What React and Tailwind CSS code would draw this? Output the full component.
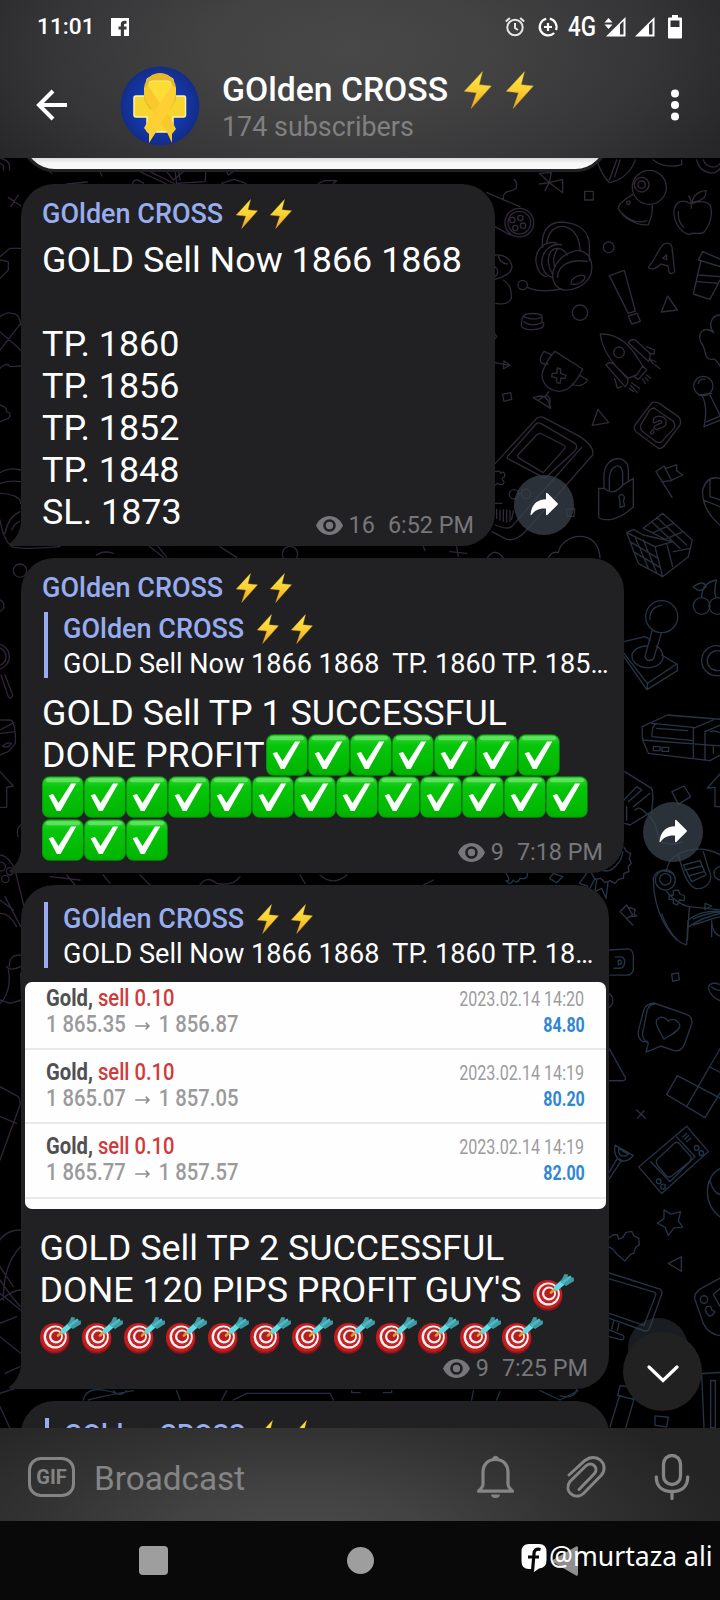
import React from "react";

function Bolt({ className }) {
  return (
    <svg viewBox="313 211 85 114" preserveAspectRatio="none" className={className}>
      <defs>
        <linearGradient id="bolt" x1="0" y1="0" x2="0" y2="1">
          <stop offset="0" stopColor="#fbe94a" />
          <stop offset=".5" stopColor="#fad133" />
          <stop offset="1" stopColor="#f0a01e" />
        </linearGradient>
      </defs>
      <path d="M369 213 314 272 351 276 335 323 396 256 359 252Z" fill="url(#bolt)" stroke="#dfae2a" strokeWidth="1.5" strokeLinejoin="round" />
    </svg>
  );
}

function Check() {
  return (
    <svg viewBox="0 0 42 42" className="h-[42px] w-[42px] shrink-0">
      <defs>
        <linearGradient id="chk" x1="0" y1="0" x2="0" y2="1">
          <stop offset="0" stopColor="#35d435" />
          <stop offset=".25" stopColor="#06c60a" />
          <stop offset="1" stopColor="#00b400" />
        </linearGradient>
      </defs>
      <rect x="0" y=".3" width="41.8" height="41.4" rx="7.5" fill="#0a8f10" />
      <rect x=".9" y="1.200" width="40" height="39.6" rx="6.8" fill="url(#chk)" />
      <rect x="4" y="2.200" width="34" height="4" rx="2" fill="#8bf08b" opacity=".55" />
      <path d="M6.600 19.300 11 18 16.500 27 29 7.500 34.200 7.500 18.600 35 14.800 35Z" fill="#fff" />
    </svg>
  );
}

function Target() {
  return (
    <svg viewBox="0 0 42 42" className="h-[42px] w-[42px] shrink-0">
      <ellipse cx="14.800" cy="22.300" rx="14.700" ry="14.400" fill="#8d1515" />
      <ellipse cx="14.600" cy="20.300" rx="14.600" ry="14.400" fill="#c21d20" />
      <circle cx="15.200" cy="20" r="11.600" fill="#f6f0f0" />
      <circle cx="15.500" cy="19.800" r="9.500" fill="#c42225" />
      <circle cx="16" cy="19.600" r="7" fill="#f6f0f0" />
      <circle cx="16.200" cy="19.400" r="4.900" fill="#b81c1f" />
      <path d="M18 18.600 23 14.200" stroke="#d9a032" strokeWidth="2.600" strokeLinecap="round" />
      <path d="M23.500 14 31 7.400" stroke="#5fdde4" strokeWidth="5.400" strokeLinecap="round" />
      <path d="M27.500 8 31.500 0 35 .6 34.600 3.600 40.800 3.600 41 7 33 12Z" fill="#3d9ba6" />
      <path d="M30 8.400 37 3" stroke="#4fb8c2" strokeWidth="2.600" strokeLinecap="round" />
    </svg>
  );
}

function Eye() {
  return (
    <svg viewBox="0 0 27 19" className="h-[19px] w-[27px] shrink-0">
      <path fillRule="evenodd" fill="#77777b" d="M13.5 0C7.5 0 2.6 3.7 0 9.5 2.6 15.300 7.500 19 13.500 19S24.400 15.300 27 9.500C24.400 3.700 19.500 0 13.500 0ZM13.500 3.200A6.300 6.300 0 1 1 13.500 15.800 6.300 6.300 0 0 1 13.500 3.200ZM13.500 5.800A3.700 3.700 0 1 0 13.500 13.200 3.700 3.700 0 0 0 13.500 5.800Z" />
    </svg>
  );
}

function Meta({ views, time, className }) {
  return (
    <div className={"flex h-7 items-center text-[23.400px] leading-7 whitespace-pre text-[#77777b] " + className}>
      <Eye />
      <span className="ml-[6px]">{views}</span>
      <span className="ml-[13px]">{time}</span>
    </div>
  );
}

function Name() {
  return (
    <div className="flex h-8 items-center pt-[1px] text-[27px] leading-8 font-medium whitespace-nowrap text-[#98adf0]">
      GOlden CROSS
      <Bolt className="ml-[13px] h-[30px] w-[22px]" />
      <Bolt className="ml-[12px] h-[30px] w-[22px]" />
    </div>
  );
}

function Reply({ text }) {
  return (
    <div className="ml-[2px] flex h-[66px] border-l-4 border-[#98adf0] pl-[15px]">
      <div className="flex flex-col">
        <Name />
        <div className="mt-[5px] h-[30px] text-[27.050px] leading-[30px] whitespace-pre text-white">{text}</div>
      </div>
    </div>
  );
}

function Bubble({ children, className }) {
  return (
    <div className={"relative flex shrink-0 flex-col rounded-[33px] rounded-bl-none bg-[#212123] " + className}>
      {children}
      <svg viewBox="0 0 13 30" className="absolute bottom-0 -left-[12px] h-[30px] w-[13px]">
        <path d="M13 0C12 13 8.500 22 .5 27.500-.3 28.500.5 29.500 2 30H13Z" fill="#212123" />
      </svg>
    </div>
  );
}

function Share({ className }) {
  return (
    <div className={"flex h-[60px] w-[60px] shrink-0 items-center justify-center rounded-full bg-[#39414c]/75 pb-[2px] " + className}>
      <svg viewBox="0 0 28 24" className="h-6 w-7">
        <path d="M.5 22.500C1.500 12.500 7 7.500 16 7.200V1.500Q16.300.4 17.300 1L27.600 11.300Q28.200 12 27.600 12.700L17.300 23Q16.300 23.600 16 22.500V16.500C9 16 4.500 18.500 1.600 22.800Q.6 23.800.5 22.500Z" fill="#fff" />
      </svg>
    </div>
  );
}

function Trade({ open, close, time, profit, className }) {
  return (
    <div className={"flex h-[74.200px] justify-between border-b-2 border-[#e9e9ea] px-[21px] " + className}>
      <div className="flex flex-col">
        <div className="h-[26px] w-[150px] origin-left scale-x-[0.825] text-[24.500px] leading-[26px] font-medium whitespace-pre text-[#cf3b3b]">
          <span className="font-bold text-[#505052]">Gold,</span> sell 0.10
        </div>
        <div className="flex h-[26px] w-[240px] origin-left scale-x-[0.85] items-center text-[23.800px] leading-[26px] font-medium whitespace-pre text-[#9a9a9c]">
          {open}
          <svg viewBox="0 0 20 12" className="mx-[10px] mt-1 h-3 w-[19px]">
            <path d="M1 6H18M14 2.500 18 6 14 9.500" fill="none" stroke="#8e8e90" strokeWidth="1.800" />
          </svg>
          {close}
        </div>
      </div>
      <div className="flex flex-col items-end">
        <div className="h-[26px] origin-right scale-x-[0.785] text-[20.500px] leading-[29px] whitespace-pre text-[#9c9c9e]">{time}</div>
        <div className="h-[26px] origin-right scale-x-[0.77] text-[20.800px] leading-[28px] font-bold text-[#2f86d4]">{profit}</div>
      </div>
    </div>
  );
}

function Doodles() {
  return (
    <svg viewBox="0 0 720 1600" className="absolute -top-[158px] left-0 h-[1600px] w-[720px]" fill="none" strokeLinecap="round" strokeLinejoin="round">
      <g transform="translate(480 160) scale(.33333)" strokeWidth="4" stroke="#302938">
        <path d="M350 0C360 30 370 50 388 68 430 60 455 30 466 0M410 0 388 60M420 0 404 50M520 0C545 20 580 22 605 14V0M650 0C660 45 715 50 722 20M670 0C680 25 710 28 722 8" />
        <path d="M178 40 208 68 214 38ZM208 68 248 98V58ZM208 68 195 92M208 68 178 72M314 94H340V120H314Z" />
        <circle cx="508" cy="82" r="51" /><circle cx="485" cy="74" r="22" /><circle cx="485" cy="74" r="11" />
        <path d="M458 104C430 120 415 135 415 145 430 175 470 198 505 194 515 170 520 150 516 133M425 158C450 185 480 190 500 182M440 126q12-8 10 4-10 10-10-4" />
        <path d="M634 132C600 112 580 130 582 165 588 200 610 222 628 223 645 215 655 225 670 218 690 200 700 160 690 135 672 118 650 125 634 132ZM634 145C635 125 632 115 626 108M636 128C640 100 665 92 678 92 680 115 660 125 640 126M595 155Q592 185 612 202" />
        <path d="M20 98 120 140M45 200 90 225M70 118C68 85 95 100 108 85 112 70 108 62 102 58" />
        <circle cx="118" cy="188" r="43" /><circle cx="118" cy="188" r="34" /><circle cx="97" cy="180" r="8" /><circle cx="121" cy="174" r="8" /><circle cx="106" cy="204" r="8" /><circle cx="129" cy="197" r="8" />
        <path d="M188 262C182 215 205 186 245 186 305 190 330 220 328 262V302M200 250C205 210 230 196 255 200 290 210 300 245 300 272M230 250C200 240 165 265 168 305 170 330 185 348 200 350M245 254C215 250 185 270 185 310 188 330 195 345 215 352M262 285C250 262 225 260 212 275 200 295 205 325 218 342M235 265Q215 285 224 322" />
        <path d="M218 352C215 310 260 270 300 272 335 280 340 315 332 345 315 380 280 392 250 390 232 385 220 370 218 352ZM232 352C235 315 270 295 322 305M274 372C270 355 300 340 314 348 318 362 290 378 274 372ZM142 382C170 395 205 395 245 387" />
        <circle cx="128" cy="375" r="14" /><circle cx="386" cy="262" r="16" /><circle cx="300" cy="458" r="23" />
        <path d="M505 322C525 300 535 265 552 252 565 246 574 252 576 262L584 335C578 343 570 342 567 335L564 318 542 312C530 328 512 330 505 322ZM548 295 560 284V299Z" />
        <path d="M388 347 433 331 466 453 445 460ZM445 468 471 460 481 484 455 492ZM563 408 592 450 544 456ZM354 748 386 788 337 796Z" />
        <path d="M45 285C75 282 92 298 96 320 95 340 75 350 45 358M45 320Q62 335 45 350M55 288Q60 310 82 312M70 360C88 370 95 390 94 415 88 430 70 434 48 430" />
        <path d="M125 485C125 475 130 472 130 468 135 458 180 458 186 468V485C195 490 192 502 180 505 160 512 130 510 124 498ZM130 468C140 478 175 480 186 470M132 485C145 497 175 497 186 486M45 608 88 616M72 603 90 616 70 626ZM68 703 92 698 95 718 72 724ZM45 522 50 530 45 536" />
        <path d="M361 522C420 520 455 560 488 618L470 645 442 655C395 610 365 565 361 522ZM445 548Q455 535 466 540L510 580Q512 595 505 604ZM378 615Q385 605 398 610L440 650Q450 665 435 680ZM500 560 524 570 522 582 508 580M404 655 412 684 425 680M488 618 500 630 475 658 462 650M508 595 520 612M525 614 540 626M516 600 528 606M500 645 512 655M495 652 504 662M488 658 496 670M455 668 478 685M452 676 472 698M448 685 460 695" />
        <circle cx="417" cy="577" r="16" />
        <path d="M225 574 308 627C290 665 265 695 235 694 200 690 180 660 188 635Q200 600 225 574ZM204 612C170 615 180 590 192 574L214 584M297 645 323 660C310 680 290 680 276 672M206 695 198 706M160 713 182 708Q205 708 212 745ZM175 720Q190 710 200 706 215 715 208 735M232 624 242 627 242 640 258 646 255 656 243 654 240 670 230 668 231 654 215 650 217 640 230 640Z" />
        <path d="M516 728Q525 724 538 730L595 770Q605 780 600 795L555 855Q545 868 535 865L468 815Q460 805 465 795ZM522 744 580 784Q588 795 582 805L545 845Q538 850 528 845L485 812Q478 800 485 790L508 752Q514 744 522 744M520 778C530 760 565 770 558 790 555 808 535 800 532 810L522 805C520 790 548 795 545 785 540 775 530 790 520 788ZM514 812q8-6 8 4-8 12-10 2z" />
        <path d="M46 910 170 775Q180 768 190 772L300 830Q345 860 338 885L140 1110Q110 1145 80 1138L36 1115M82 890 165 795Q172 786 182 790L285 850Q295 860 285 872L195 955 82 895ZM118 895Q110 890 116 882L170 825Q178 818 186 822L250 855Q260 860 252 868L190 938ZM305 862 95 1100Q80 1110 46 1095M46 935Q60 930 62 940 75 930 74 950 60 955 72 965 72 980 52 970L46 975M46 1030H66M50 1048V1075M60 1050V1080M70 1050V1084M80 1050V1086M90 1052V1084M100 1052 95 1078" />
        <circle cx="102" cy="1003" r="14" /><circle cx="138" cy="1001" r="14" /><path d="M258 1048 284 1046 282 1070 262 1068Z" />
      </g>
      <g transform="translate(480 160) scale(.33333)" strokeWidth="4" stroke="#2a303e">
        <path d="M655 300 668 275 722 298M655 300 722 320M662 305 640 402 690 418 720 360M655 345 720 350M652 365 715 370M722 465C690 465 685 500 702 518 670 495 650 520 664 550 680 565 670 600 695 598 705 595 708 600 722 620" />
        <path d="M690 705 722 770M665 705Q685 740 672 800L722 780M655 705 695 700M680 785 722 768M655 670Q660 655 675 658" /><circle cx="670" cy="678" r="29" />
        <path d="M372 985V945C375 885 445 880 445 930V960M388 990V955C390 910 430 905 428 945V975M356 985 372 985Q400 1010 428 975L460 955V1040Q430 1070 395 1078 360 1082 356 1070ZM418 1015C412 1000 435 1000 433 1016L430 1022 434 1038 420 1042 420 1024ZM528 935 576 1012M528 935 552 918 575 962 546 965M556 926 590 914 590 932 608 945 572 962" />
        <path d="M440 1118 460 1108 490 1125 578 1145 560 1150 525 1160ZM490 1105 548 1060 637 1140 625 1190 548 1250 475 1210 440 1118M525 1160 548 1250M560 1150 578 1220M490 1105 560 1140M465 1130 505 1225M490 1140 530 1238M450 1145 535 1195M460 1175 540 1222M515 1085 600 1165M530 1072 620 1155M520 1118 580 1090M560 1135 610 1115M580 1175 630 1165M720 955Q680 945 668 990 665 1050 720 1095M690 960V1010L722 1020M670 1020 720 1040" />
        <path d="M205 1194Q215 1172 235 1178C245 1120 355 1100 360 1194M22 1194Q45 1160 70 1194" />
      </g>
      <g transform="translate(480 540) scale(.33333)" strokeWidth="4" stroke="#263546">
        <circle cx="665" cy="198" r="25" /><circle cx="712" cy="198" r="25" />
        <path d="M665 173C665 145 680 125 710 120Q700 150 708 172M640 140Q670 118 678 140 660 162 640 140" />
        <circle cx="545" cy="230" r="48" /><path d="M510 238Q508 202 545 196" /><circle cx="710" cy="362" r="45" /><circle cx="712" cy="362" r="30" />
        <path d="M516 272 495 350C500 365 518 365 522 352L544 280M432 305 495 290 512 300M432 340 502 430 590 372 545 345M502 430V448L592 392V372M432 350 500 448M500 318C465 320 450 340 458 360 480 395 545 390 550 350Q545 325 528 318" />
        <path d="M487 560 562 525 722 538M487 560Q485 590 490 605L505 640 690 662 722 645M487 600 722 618M516 550 640 562V656M530 550Q515 555 516 590L640 602M530 565 622 572M640 565 700 540M675 575V660M675 575 722 555M690 575Q705 570 720 578M700 620V640M520 620H540V632H520ZM546 622H566V634H546ZM722 700 682 744 705 742V800H722" />
        <path d="M434 695 515 745Q522 760 515 815L450 855 434 850M432 780 470 740 485 750 445 785M440 800V840M460 800 510 760M465 810Q475 800 485 808L505 825M576 755 612 738 632 770 595 793ZM510 830C540 860 525 895 548 908 570 915 590 915 608 905" />
        <path d="M560 990C570 930 660 910 722 945M520 1015C530 985 555 990 580 1000M520 1015C520 1080 540 1150 590 1200M595 945C610 1000 620 1030 645 1045 680 1050 705 1020 685 985L670 935M610 975 660 962 678 1005 635 1025ZM615 990 665 978M625 1008 672 995M622 1200 628 1100C600 1095 570 1070 560 1055M628 1100 722 1110M625 1140C650 1120 690 1110 722 1115M640 1155 700 1135 722 1130M675 1090 695 1098 675 1108ZM695 1190V1150" />
        <circle cx="556" cy="1020" r="30" /><circle cx="556" cy="1018" r="17" /><circle cx="722" cy="1000" r="20" />
        <path d="M580 1052 595 1050 600 1062 614 1068 612 1082 598 1080 592 1095 580 1090 580 1078 567 1078 568 1065 580 1066Z" />
        <path d="M432 922 440 935 452 940 448 955 454 970 444 980 447 995 432 1000 430 1015 415 1018 405 1030 390 1022 375 1028 362 1015 345 1018 335 1000M355 985Q385 1005 410 975 428 955 428 935M345 1015 325 1055 322 1038 298 1030 320 1000M350 1020 345 1055 365 1045 378 1075 384 1028M78 1000Q95 1025 78 1022 90 1040 100 1020 110 1035 120 1015 145 1020 142 1000M208 1015 220 1000 248 1010 230 1028Z" />
        <path d="M420 1115 458 1155M420 1115 440 1095 458 1125 440 1135M445 1102 466 1108 462 1122 470 1128 455 1130" />
      </g>
      <g transform="translate(560 900) scale(.33333 .3444)" strokeWidth="4" stroke="#223446">
        <path d="M305 40C320 80 350 128 380 130L384 60M385 78C420 55 450 45 480 40M400 55Q440 38 480 35M455 60Q455 95 480 105M148 145 205 142Q220 145 220 165V200Q218 218 200 218H150M165 165H185C200 170 195 198 180 198H162M175 175V188Q190 185 182 175ZM335 215 355 212 358 232 338 236ZM148 272Q160 280 158 298 155 308 148 312M480 245Q450 235 445 255 450 280 480 292M455 252Q470 265 480 262" />
        <path d="M262 318Q270 300 290 302L380 332Q400 340 395 360L375 415Q365 440 345 438L302 424 258 442 265 415Q245 405 248 385ZM285 299Q258 300 252 318L235 380Q232 402 250 412L262 410M312 404C295 375 285 360 290 348 300 335 318 340 325 352 335 340 355 350 360 365 358 380 335 390 312 404Z" />
        <path d="M148 432 196 515Q198 525 185 525H148M480 432 380 600M320 565 352 510 480 575M320 565 435 632 480 560M450 485 480 500M230 610 256 634M252 612 232 634" />
        <path d="M380 657 445 730 305 852 236 775ZM350 688 405 745 330 818 272 760M345 705Q355 700 362 712L390 742Q398 752 388 760L335 802Q325 808 318 800L292 770Q285 758 295 750ZM368 688 380 678M374 695 386 684M380 702 392 692" />
        <circle cx="410" cy="720" r="7" /><circle cx="424" cy="735" r="7" /><circle cx="296" cy="817" r="7" /><circle cx="309" cy="832" r="7" />
        <path d="M148 790 172 750 185 755 148 810M165 712 220 742Q200 765 178 755 160 740 165 712ZM176 722 205 738Q195 748 180 740 174 732 176 722M312 900 333 912 362 905 355 932 368 950 342 952 325 974 315 950 292 938 312 925ZM480 780C435 800 425 880 480 920M450 815Q460 850 480 855" />
        <path d="M148 980 160 972 172 972 176 985 188 980 198 965 215 962 222 975 236 982 238 1000 226 1010 222 1025 210 1030 195 1048 182 1038 170 1028 160 1015 148 1008M325 1055 364 1036 364 1078ZM148 1083 300 1130Q308 1135 305 1145L268 1245Q262 1255 250 1250L148 1215M148 1100 280 1138Q290 1142 286 1150L252 1235 148 1200M178 1225 172 1250M162 1220 155 1245M148 1248 190 1265Q195 1275 185 1277L148 1268M480 1098 420 1130Q400 1145 405 1160L430 1230Q445 1260 480 1265M480 1128 460 1145 480 1180" />
        <circle cx="432" cy="1160" r="11" /><path d="M440 1180 452 1180 455 1190 465 1195 458 1205 448 1208 440 1200 436 1190Z" />
        <path d="M180 1410 222 1415 220 1450 173 1438ZM178 1440 150 1530M222 1450 195 1540M285 1498 325 1502 320 1530 285 1525ZM425 1375 480 1372M425 1375 432 1532M452 1395H466V1532H452ZM0 1440Q45 1450 50 1420" />
      </g>
      <g transform="scale(.33333)" strokeWidth="4" stroke="#302538">
        <path d="M0 474C20 478 32 490 28 510M0 490Q15 495 10 510M25 592 63 618M55 585 32 620M0 770 30 745 62 745M0 780 25 785V810L0 835M0 950Q20 935 35 940 60 940 62 975M0 995 62 1050M62 970 0 1050M0 1105Q20 1085 30 1100L62 1098M0 1215Q20 1220 20 1235 38 1240 25 1255L0 1265M145 510 155 520M300 515 306 528M200 552 262 546M420 515 500 552M450 515 525 552M500 515 520 540 550 515M398 550Q405 530 430 550M665 550 702 538 738 550M955 550 975 542 1010 542 1000 550M525 515 530 550 615 545 618 515M536 515 540 540M680 515 685 525 700 515" />
        <path d="M0 1418Q30 1400 62 1410M0 1450Q30 1440 62 1445M0 1480C30 1480 62 1490 62 1510M15 1600Q25 1550 60 1535M0 1560Q10 1620 35 1640 60 1650 180 1640M35 1590Q45 1570 58 1565M450 1640 490 1672M475 1640 500 1672M660 1640 710 1672M290 1665Q310 1650 340 1660M1270 1640 1275 1652M1350 1655 1400 1660M1370 1640 1375 1670" />
        <circle cx="870" cy="1662" r="23" /><circle cx="60" cy="1712" r="20" /><circle cx="-6" cy="1817" r="18" /><circle cx="-10" cy="1970" r="38" /><circle cx="-10" cy="1970" r="28" />
        <path d="M3 2025 25 2090Q35 2100 38 2085L15 2025M0 2160H30Q48 2165 46 2230L25 2255 0 2265M0 2190 42 2168M8 2240Q20 2225 34 2230 25 2245 8 2240M0 2200 45 2195M0 2315 40 2358 20 2362V2422H0M62 2475Q48 2485 54 2510" />
        <circle cx="3" cy="2600" r="13" /><circle cx="30" cy="2614" r="11" /><circle cx="16" cy="2637" r="11" />
        <path d="M0 2565Q40 2570 55 2650L72 2720M0 2740Q30 2740 50 2780M15 2690 62 2780M0 2700 40 2730M28 2900Q25 2865 62 2865M20 2900Q30 2915 62 2900M25 2910Q35 2960 10 3000L0 3010M62 2920 65 3000 30 3010 0 3000" />
        <path d="M0 3260 55 3290Q62 3300 60 3315L0 3480M0 3350 50 3370M62 3690Q20 3690 0 3720M62 3740Q10 3790 10 3900M0 3800 40 3860M0 3900Q40 3870 62 3870M0 3840Q40 3900 62 3920M150 2630 240 2640M200 2625 225 2655M310 2625 330 2650M420 2625 450 2655M600 2655Q620 2625 650 2650 700 2660 720 2630M900 2625 915 2650M960 2625Q1000 2660 1040 2625M1270 2655 1300 2640" />
        <path d="M0 3880 62 3930M0 3970 50 3950M0 4010 62 4060M15 4120 60 4100M0 4180 62 4160M0 4220 30 4285M0 4285V4500M5 4310V4285" stroke="#28273e" />
        <path d="M250 4200Q260 4150 350 4180M265 4200Q300 4190 400 4172M340 4172Q360 4195 380 4172M530 4172 540 4200M680 4172 665 4200M700 4200 740 4180 990 4180 1000 4200M1055 4172V4178H1080M1150 4178H1175V4172M1420 4172 1415 4200M1500 4175 1490 4200M1620 4172 1680 4200 1735 4172" stroke="#203040" />
      </g>
    </svg>
  );
}

function Header() {
  return (
    <header className="z-10 flex h-[158px] shrink-0 flex-col bg-[radial-gradient(ellipse_420px_190px_at_350px_50px,#484849_0%,#424243_35%,#353537_72%,#272729_100%)]">
      <div className="flex h-[54px] items-center pl-[37px] text-white">
        <span className="w-[74px] text-[22.700px] font-medium">11:01</span>
        <svg viewBox="0 0 18 18" className="h-[18px] w-[18px]">
          <path fillRule="evenodd" fill="#fff" d="M0 0H18V18H13V11.500H15.500V8.500H13V7Q13 5.800 14.200 5.800H15.500V2.800H13.500Q9.800 2.800 9.800 6.500V8.500H7.500V11.500H9.800V18H0Z" />
        </svg>
        <svg viewBox="0 0 24 24" className="ml-[374px] h-6 w-6" fill="none" stroke="#e6e6e6" strokeWidth="2">
          <circle cx="12" cy="12.500" r="7.700" /><path d="M12 8V13L15 15M2.800 6.500 6.800 3M21.200 6.500 17.200 3" />
        </svg>
        <svg viewBox="0 0 24 24" className="ml-[9px] h-6 w-6" fill="none" stroke="#fff" strokeWidth="2.200">
          <path d="M13.800 3.700A8.500 8.500 0 0 1 20 15M18.200 18A8.500 8.500 0 1 1 10.200 3.700M12 8V16M8 12H16" />
        </svg>
        <span className="ml-[8px] w-[27px] origin-left scale-x-[0.83] text-[27px] font-medium">4G</span>
        <svg viewBox="0 0 22 20" className="ml-[9px] h-5 w-[22px]">
          <path fillRule="evenodd" fill="#fff" d="M21.500 0V19.500H2ZM16 7.500V17.500H19.500V4Z" /><path fill="#fff" d="M4.500 1 8.500 5.500H.5ZM4.500 12 .5 7.500H8.500Z" />
        </svg>
        <svg viewBox="0 0 20 20" className="ml-[9px] h-5 w-5">
          <path fillRule="evenodd" fill="#fff" d="M19.500 0V19.500H0ZM14 7.500V17.500H17.500V4Z" />
        </svg>
        <svg viewBox="0 0 14 24" className="ml-[13px] h-6 w-[14px]">
          <path fillRule="evenodd" fill="#fff" d="M4 0H10V2.500H13Q14 2.500 14 3.500V22.500Q14 23.500 13 23.500H1Q0 23.500 0 22.500V3.500Q0 2.500 1 2.500H4ZM2.500 5.500V12H11.500V5.500Z" />
        </svg>
      </div>
      <div className="flex h-[103px] items-center pl-[36px]">
        <svg viewBox="0 0 32 32" className="-mt-[1px] h-8 w-8" fill="none" stroke="#fff" strokeWidth="4">
          <path d="M31 16H3M17 2 3 16 17 30" />
        </svg>
        <svg viewBox="0 0 80 80" className="ml-[52px] h-20 w-20">
          <defs>
            <radialGradient id="av"><stop offset=".5" stopColor="#123bb8" /><stop offset="1" stopColor="#142c86" /></radialGradient>
          </defs>
          <circle cx="40" cy="40" r="39.500" fill="url(#av)" />
          <path d="M27 30V15Q27 12 30 12H50Q53 12 53 15V30H64Q65.500 30 65.500 32V49Q65.500 51 63.500 51H53V64Q53 66 51 66H29Q27 66 27 64V51H16Q14 51 14 49V32Q14 30 16 30Z" fill="#f5d52e" stroke="#fff3a8" strokeWidth="1.500" />
          <path d="M24 33V22C26 2 54 2 56 22V33Q54 38 50 43L40 46 30 43Q26 38 24 33Z" fill="#e6b92c" />
          <path d="M29 18Q29 15 32 15H48Q51 15 51 18V26L45 36 40 44 34 36 29 26Z" fill="#fbdd35" stroke="#ffee78" />
          <path d="M24 22Q24 33 28 38L45 62 52 77 52 68 56 63 51 53 33 27 28 19Z" fill="#f8c92d" />
          <path d="M56 22Q56 33 52 39L36 66 29 77 29 68 24 62 29 53 47 27 52 19Z" fill="#ffd034" />
        </svg>
        <div className="mt-[2px] ml-[22px] flex w-[441px] flex-col">
          <div className="flex h-10 items-center text-[33.700px] leading-10 font-medium whitespace-nowrap text-white">
            GOlden CROSS
            <Bolt className="ml-[16px] h-[38px] w-[28px]" />
            <Bolt className="ml-[14px] h-[38px] w-[28px]" />
          </div>
          <div className="mt-[1px] h-8 text-[26.900px] leading-8 text-[#808081]">174 subscribers</div>
        </div>
        <svg viewBox="0 0 10 32" className="-mt-[1px] ml-[7px] h-8 w-[10px]">
          <circle cx="5" cy="4.500" r="4" fill="#fff" /><circle cx="5" cy="16" r="4" fill="#fff" /><circle cx="5" cy="27.500" r="4" fill="#fff" />
        </svg>
      </div>
    </header>
  );
}

const SIGNAL = ["GOLD Sell Now 1866 1868", "", "TP. 1860", "TP. 1856", "TP. 1852", "TP. 1848", "SL. 1873"];

export default function App() {
  return (
    <div className="flex h-[1600px] w-[720px] flex-col overflow-hidden bg-black font-['Roboto',sans-serif]">
      <Header />
      <main className="relative h-[1270px] shrink-0 overflow-hidden bg-black">
        <Doodles />
        <div className="relative flex flex-col gap-3 pl-[21px]">
          <div className="-mt-[60px] flex h-[74px] w-[588px] flex-col rounded-[33px] bg-[#212123] p-[3px]">
            <div className="h-[68px] rounded-[31px] bg-[#f7f7f7] bg-linear-to-b from-[#ddd] from-[84%] to-[#f8f8f8] to-[92%]" />
          </div>

          <div className="flex items-end gap-[19px]">
            <Bubble className="h-[362px] w-[474px] pt-[13px] pl-[21px]">
              <Name />
              <div className="mt-[10px] flex h-[294px] flex-col items-start text-[35.900px] leading-[42px] whitespace-pre text-white">
                {SIGNAL.map((line, i) => <div key={i} className="h-[42px]">{line}</div>)}
              </div>
              <Meta views="16" time="6:52 PM" className="mr-[21px] -mt-[22px] self-end" />
            </Bubble>
            <Share className="mb-[11px]" />
          </div>

          <div className="flex items-end gap-[19px]">
            <Bubble className="h-[315px] w-[603px] pt-[13px] pl-[21px]">
              <Name />
              <div className="h-[9px]" />
              <Reply text={"GOLD Sell Now 1866 1868  TP. 1860 TP. 185…"} />
              <div className="mt-[14px] text-[35.850px] leading-[42px] whitespace-pre text-white">
                <div>GOLD Sell TP 1 SUCCESSFUL</div>
                <div className="flex h-[42px]"><span className="w-[224px]">DONE PROFIT</span>{Array.from({ length: 7 }, (_, i) => <Check key={i} />)}</div>
                <div className="flex h-[43px]">{Array.from({ length: 13 }, (_, i) => <Check key={i} />)}</div>
                <div className="flex h-[42px]">{Array.from({ length: 3 }, (_, i) => <Check key={i} />)}</div>
              </div>
              <Meta views="9" time="7:18 PM" className="mr-[21px] -mt-[23px] self-end" />
            </Bubble>
            <Share className="mb-[11px]" />
          </div>

          <div className="flex items-end gap-[19px]">
            <Bubble className="h-[504px] w-[588px] pt-[17px]">
              <div className="pl-[21px]"><Reply text={"GOLD Sell Now 1866 1868  TP. 1860 TP. 18…"} /></div>
              <div className="mx-[3.500px] mt-[14px] flex h-[227px] flex-col overflow-hidden rounded-[7px] bg-[#fefefe]">
                <Trade className="-mt-[6px] pt-[9px]" open="1 865.35" close="1 856.87" time="2023.02.14 14:20" profit="84.80" />
                <Trade className="pt-[9px]" open="1 865.07" close="1 857.05" time="2023.02.14 14:19" profit="80.20" />
                <Trade className="pt-[9px]" open="1 865.77" close="1 857.57" time="2023.02.14 14:19" profit="82.00" />
              </div>
              <div className="mt-[18px] pl-[18.500px] text-[35.850px] leading-[42px] whitespace-pre text-white">
                <div>GOLD Sell TP 2 SUCCESSFUL</div>
                <div className="flex h-[42px]"><span className="w-[493px]">DONE 120 PIPS PROFIT GUY'S</span><div className="mt-[5px]"><Target /></div></div>
                <div className="mt-[6px] flex h-[43px]">{Array.from({ length: 12 }, (_, i) => <Target key={i} />)}</div>
              </div>
              <Meta views="9" time="7:25 PM" className="mr-[21px] -mt-[6px] self-end" />
            </Bubble>
            <Share className="mb-[11px] opacity-60" />
          </div>

          <Bubble className="h-[200px] w-[588px] pt-[17px] pl-[22px]">
            <Reply text={"GOLD Sell Now 1866 1868  TP. 1860 TP. 18…"} />
          </Bubble>
        </div>
        <div className="absolute top-[1174px] left-[623px] flex h-[79px] w-[79px] items-center justify-center rounded-full bg-[#212121]">
          <svg viewBox="0 0 32 18" className="mt-[4px] h-[18px] w-8" fill="none" stroke="#fff" strokeWidth="3.200" strokeLinecap="round" strokeLinejoin="miter">
            <path d="M2 2 16 15.500 30 2" />
          </svg>
        </div>
      </main>

      <div className="flex h-[93px] shrink-0 items-center bg-[radial-gradient(ellipse_430px_170px_at_300px_110px,#4a4a4a_0%,#424242_30%,#333_62%,#242425_100%)] pt-[4px] pl-[28px]">
        <div className="flex h-10 w-[47px] items-center justify-center rounded-[13px] border-3 border-[#848484] text-[20px] leading-none font-bold text-[#848484]">GIF</div>
        <span className="ml-[19px] w-[360px] pt-[4px] text-[33.300px] leading-10 text-[#858585]">Broadcast</span>
        <svg viewBox="0 0 40 46" className="ml-[21px] h-[46px] w-10" fill="none" stroke="#858585" strokeWidth="3.200" strokeLinejoin="round">
          <path d="M20.500 5.500C12.500 5.500 8 11 8 18V30Q8 33 3.500 37.200H37.500Q33 33 33 30V18C33 11 28.500 5.500 20.500 5.500Z" />
          <path d="M17.500 5.500Q17.500 2.300 20.500 2.300 23.500 2.300 23.500 5.500" fill="#858585" strokeWidth="1" />
          <path d="M16 40.500H25Q24.500 44 20.500 44 16.500 44 16 40.500Z" fill="#858585" stroke="none" />
        </svg>
        <svg viewBox="0 0 44 48" className="ml-[50px] h-12 w-11" fill="none" stroke="#858585" strokeWidth="3" strokeLinecap="round">
          <path d="M4 22 20 7.500C31-1.500 45 11 36.500 22L18.500 40.500C10 48-2 38 5 28.500L21 12.800C27 8 34 14.500 29.500 20.500L14 36.500" />
        </svg>
        <svg viewBox="0 0 36 48" className="ml-[45px] h-12 w-9" fill="none" stroke="#858585" strokeWidth="3.300" strokeLinecap="round">
          <rect x="9.500" y="2.500" width="17" height="29" rx="8.500" /><path d="M2.300 24C2.300 34 9 38.500 18 38.500S33.700 34 33.700 24M18 38.500V45.500" />
        </svg>
      </div>

      <nav className="relative flex h-[79px] shrink-0 items-center bg-[#090909] pl-[139px]">
        <div className="h-[29px] w-[29px] rounded-[4px] bg-[#9e9e9e]" />
        <div className="ml-[179px] h-[27px] w-[27px] rounded-full bg-[#9e9e9e]" />
        <svg viewBox="0 0 28 32" className="ml-[177px] h-8 w-7"><path d="M25 1.500Q27 .5 27 3V29Q27 31.500 25 30.500L2.500 17.500Q.5 16 2.500 14.500Z" fill="#8f8f8f" /></svg>
        <div className="absolute top-[22px] left-[521px] flex items-center text-white">
          <svg viewBox="0 0 26 30" className="h-[30px] w-[26px]">
            <path d="M8 1H18Q25.500 1 25.500 9V17Q25.500 25 18 25.500L13 29 12 26H8Q.5 26 .5 18V9Q.5 1 8 1Z" fill="#fff" />
            <path d="M19.500 6.500Q13 5 13 11L11.500 28M7 14H18" fill="none" stroke="#090909" strokeWidth="3.200" />
          </svg>
          <span className="-mt-[4px] ml-[2px] font-['Noto_Sans',sans-serif] text-[26.600px] leading-[34px] whitespace-nowrap">@murtaza ali</span>
        </div>
      </nav>
    </div>
  );
}
